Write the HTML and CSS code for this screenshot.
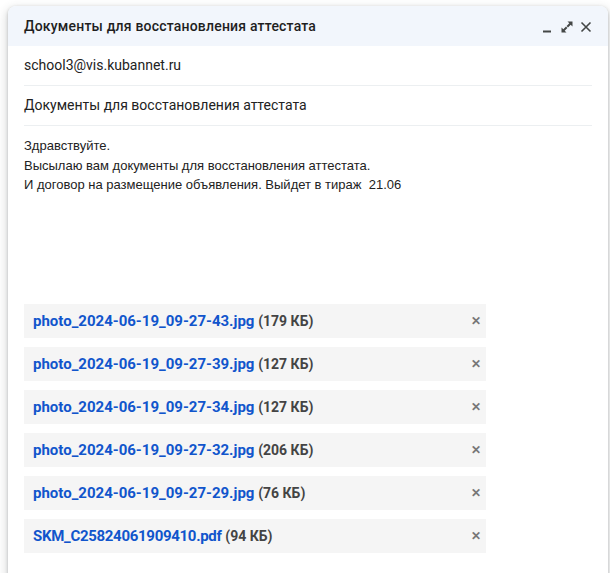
FILE: index.html
```html
<!DOCTYPE html>
<html lang="ru">
<head>
<meta charset="utf-8">
<title>Документы для восстановления аттестата</title>
<link rel="stylesheet" href="styles.css">
</head>
<body>
<div class="compose">
  <div class="header">
    <div class="title">Документы для восстановления аттестата</div>
    <div class="controls">
      <svg class="ic" width="12" height="12" viewBox="0 0 12 12"><rect x="1" y="9.5" width="8" height="2" fill="#444746"/></svg>
      <svg class="ic" width="12" height="12" viewBox="0 0 12 12"><path d="M6.5 0.5h5v5l-1.8-1.8L7 6.4 5.6 5l2.7-2.7z M5.5 11.5h-5v-5l1.8 1.8L5 5.6 6.4 7 3.7 9.7z" fill="#444746"/></svg>
      <svg class="ic" width="12" height="12" viewBox="0 0 12 12"><path d="M1.5 1.5l9 9M10.5 1.5l-9 9" stroke="#444746" stroke-width="1.6" fill="none"/></svg>
    </div>
  </div>
  <div class="row">school3@vis.kubannet.ru</div>
  <div class="row">Документы для восстановления аттестата</div>
  <div class="body">
    <div>Здравствуйте.</div>
    <div>Высылаю вам документы для восстановления аттестата.</div>
    <div>И договор на размещение объявления. Выйдет в тираж&nbsp; 21.06</div>
  </div>
  <div class="attachments">
    <div class="att"><span><a class="name">photo_2024-06-19_09-27-43.jpg</a> <span class="size">(179 КБ)</span></span><span class="x">✕</span></div>
    <div class="att"><span><a class="name">photo_2024-06-19_09-27-39.jpg</a> <span class="size">(127 КБ)</span></span><span class="x">✕</span></div>
    <div class="att"><span><a class="name">photo_2024-06-19_09-27-34.jpg</a> <span class="size">(127 КБ)</span></span><span class="x">✕</span></div>
    <div class="att"><span><a class="name">photo_2024-06-19_09-27-32.jpg</a> <span class="size">(206 КБ)</span></span><span class="x">✕</span></div>
    <div class="att"><span><a class="name">photo_2024-06-19_09-27-29.jpg</a> <span class="size">(76 КБ)</span></span><span class="x">✕</span></div>
    <div class="att"><span><a class="name caps">SKM_C25824061909410.pdf</a> <span class="size">(94 КБ)</span></span><span class="x">✕</span></div>
  </div>
</div>
</body>
</html>
```
FILE: styles.css
```css
html, body {
  margin: 0;
  padding: 0;
  background: #fff;
  overflow: hidden;
}
body {
  padding: 6px 2px 0 8px;
  font-family: Roboto, "Noto Sans", Arial, sans-serif;
}
.compose {
  width: 600px;
  min-height: 620px;
  background: #fff;
  border-radius: 8px 8px 0 0;
  box-shadow: 0 4px 8px 3px rgba(60,64,67,.15), 0 1px 3px rgba(60,64,67,.3);
}
.header {
  height: 40px;
  background: #f2f6fc;
  border-radius: 8px 8px 0 0;
  display: flex;
  align-items: center;
  justify-content: space-between;
  padding: 0 16px;
}
.title {
  font-size: 14px;
  font-weight: 500;
  letter-spacing: 0.2px;
  color: #1f1f1f;
}
.controls {
  display: flex;
  align-items: center;
  gap: 7px;
  margin-top: 1px;
}
.ic { display: block; }
.row {
  margin: 0 16px;
  height: 39px;
  line-height: 39px;
  font-size: 14px;
  color: #222;
  border-bottom: 1px solid #eceff1;
}
.body {
  padding: 10px 16px 0;
  font-family: "Liberation Sans", Arial, sans-serif;
  font-size: 13px;
  line-height: 19.5px;
  color: #222;
}
.attachments {
  margin-top: 109px;
  padding: 0 16px;
  display: flex;
  flex-direction: column;
  gap: 9px;
}
.att {
  width: 462px;
  height: 34px;
  box-sizing: border-box;
  background: #f5f5f5;
  display: flex;
  align-items: center;
  justify-content: space-between;
  padding: 0 4px 0 9px;
  font-size: 15px;
  font-weight: 700;
}
.name {
  color: #1155cc;
  text-decoration: none;
}
.caps { letter-spacing: -0.3px; }
.size {
  color: #444;
  font-size: 14px;
}
.x {
  color: #777;
  font-size: 12px;
  font-weight: 700;
  width: 12px;
  text-align: center;
}
```
